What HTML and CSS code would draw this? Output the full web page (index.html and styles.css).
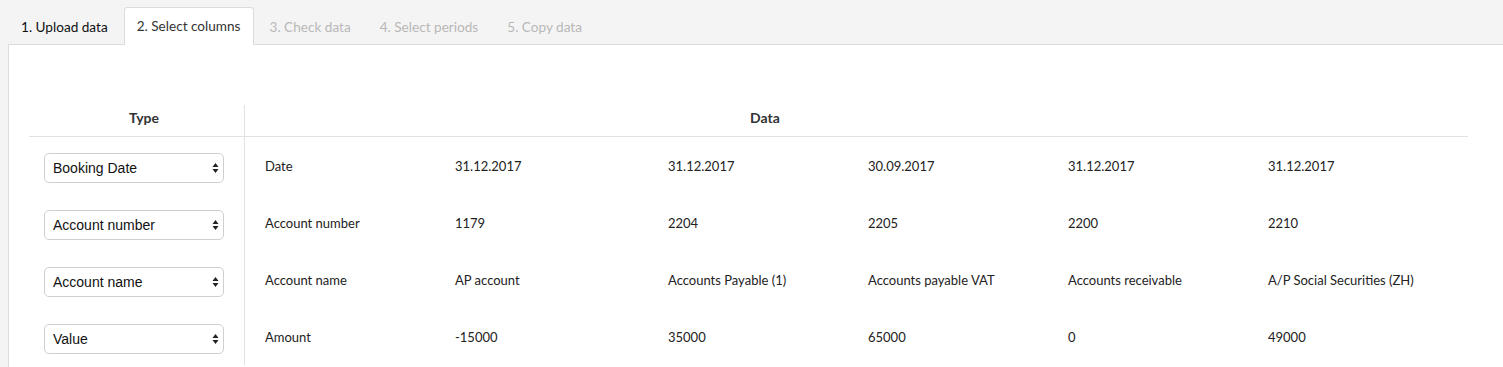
FILE: index.html
```html
<!DOCTYPE html>
<html>
<head>
  <meta charset="utf-8">
  <link rel="stylesheet" href="styles.css">
</head>
<body>
  <div class="tabs">
    <div class="tab done">1. Upload data</div>
    <div class="tab active">2. Select columns</div>
    <div class="tab disabled">3. Check data</div>
    <div class="tab disabled">4. Select periods</div>
    <div class="tab disabled">5. Copy data</div>
  </div>

  <div class="panel">
    <div class="grid">
      <div class="th th-type">Type</div>
      <div class="th th-data"><span class="data-title">Data</span></div>

      <div class="cell type">
        <div class="select-wrap">
          <select><option>Booking Date</option></select>
          <svg class="arrows" width="7" height="12" viewBox="0 0 7 12"><path d="M3.5 1 L6.5 5 L0.5 5 Z M3.5 11 L6.5 7 L0.5 7 Z" fill="#222"/></svg>
        </div>
      </div>
      <div class="cell data">
        <span>Date</span><span>31.12.2017</span><span>31.12.2017</span><span>30.09.2017</span><span>31.12.2017</span><span>31.12.2017</span>
      </div>

      <div class="cell type">
        <div class="select-wrap">
          <select><option>Account number</option></select>
          <svg class="arrows" width="7" height="12" viewBox="0 0 7 12"><path d="M3.5 1 L6.5 5 L0.5 5 Z M3.5 11 L6.5 7 L0.5 7 Z" fill="#222"/></svg>
        </div>
      </div>
      <div class="cell data">
        <span>Account number</span><span>1179</span><span>2204</span><span>2205</span><span>2200</span><span>2210</span>
      </div>

      <div class="cell type">
        <div class="select-wrap">
          <select><option>Account name</option></select>
          <svg class="arrows" width="7" height="12" viewBox="0 0 7 12"><path d="M3.5 1 L6.5 5 L0.5 5 Z M3.5 11 L6.5 7 L0.5 7 Z" fill="#222"/></svg>
        </div>
      </div>
      <div class="cell data">
        <span>Account name</span><span>AP account</span><span>Accounts Payable (1)</span><span>Accounts payable VAT</span><span>Accounts receivable</span><span>A/P Social Securities (ZH)</span>
      </div>

      <div class="cell type">
        <div class="select-wrap">
          <select><option>Value</option></select>
          <svg class="arrows" width="7" height="12" viewBox="0 0 7 12"><path d="M3.5 1 L6.5 5 L0.5 5 Z M3.5 11 L6.5 7 L0.5 7 Z" fill="#222"/></svg>
        </div>
      </div>
      <div class="cell data">
        <span>Amount</span><span>-15000</span><span>35000</span><span>65000</span><span>0</span><span>49000</span>
      </div>
    </div>
  </div>
</body>
</html>
```

FILE: styles.css
```css
* {
  margin: 0;
  padding: 0;
  box-sizing: border-box;
}

body {
  background: #f4f4f4;
  font-family: 'Lato', 'Open Sans', sans-serif;
  color: #222;
  font-size: 13px;
  overflow: hidden;
}

.tabs {
  display: flex;
  align-items: flex-end;
  height: 44px;
  padding-left: 8px;
  gap: 3px;
}

.tab {
  height: 37px;
  padding: 0 12px 1px;
  border: 1px solid transparent;
  border-bottom: none;
  display: flex;
  align-items: center;
  font-size: 13.6px;
  margin-bottom: -1px;
  position: relative;
}

.tab.done {
  color: #111;
}

.tab.active {
  background: #fff;
  border-color: #dcdcdc;
  border-radius: 3px 3px 0 0;
  color: #333;
  height: 38px;
  z-index: 1;
}

.tab.disabled {
  color: #b8b8b8;
}

.panel {
  margin-left: 8px;
  background: #fff;
  border-top: 1px solid #dcdcdc;
  border-left: 1px solid #dcdcdc;
  height: 330px;
  padding: 60px 0 0 20px;
}

.grid {
  display: grid;
  grid-template-columns: 216px 1223px;
  width: 1439px;
}

.th {
  height: 32px;
  border-bottom: 1px solid #e2e2e2;
  font-weight: 700;
  font-size: 14px;
  color: #333;
  display: flex;
  align-items: center;
  padding-bottom: 7px;
}

.th-type {
  justify-content: center;
  border-right: 1px solid #e2e2e2;
  padding-left: 15px;
}

.data-title {
  display: block;
  width: 1040px;
  text-align: center;
}

.cell {
  height: 57px;
  display: flex;
  align-items: center;
}

.cell.type {
  border-right: 1px solid #e2e2e2;
  padding-left: 15px;
}

.cell.data {
  display: grid;
  grid-template-columns: 190px 213px 200px 200px 200px 220px;
}

.cell.data span {
  padding-left: 20px;
  white-space: nowrap;
}

.select-wrap {
  position: relative;
  width: 180px;
  height: 30px;
  margin-top: 4px;
}

select {
  appearance: none;
  -webkit-appearance: none;
  width: 100%;
  height: 100%;
  border: 1px solid #cfcfcf;
  border-radius: 5px;
  background: #fff;
  font-family: 'Liberation Sans', Arial, sans-serif;
  font-size: 14px;
  color: #111;
  padding: 0 20px 0 8px;
  outline: none;
}

.arrows {
  position: absolute;
  right: 5px;
  top: 9px;
  pointer-events: none;
}
```
